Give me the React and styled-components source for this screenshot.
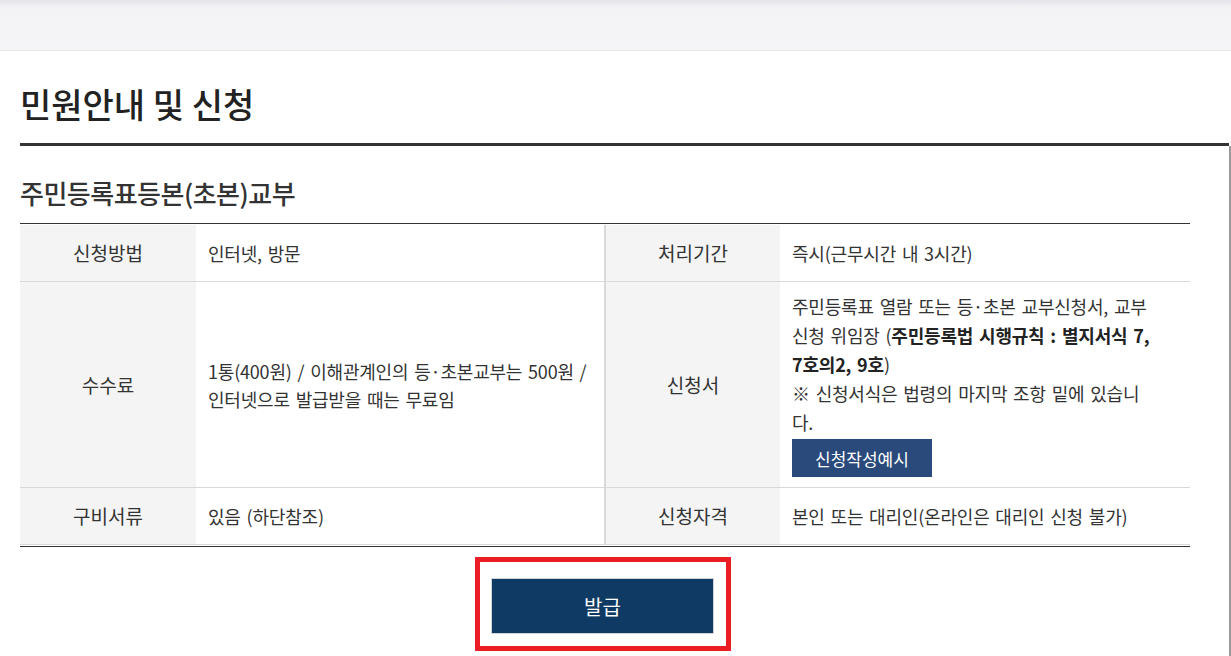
import React from 'react';
import styled, { createGlobalStyle } from 'styled-components';

const GlobalStyle = createGlobalStyle`
  html, body {
    margin: 0;
    padding: 0;
    background: #fff;
  }
  body {
    font-family: 'Noto Sans CJK KR', 'Noto Sans', sans-serif;
    color: #333;
  }
`;

const TopBar = styled.div`
  height: 50px;
  background: linear-gradient(#e3e3e9 0, #f3f2f5 7px, #f5f4f6 100%);
  border-bottom: 1px solid #e8e8e8;
`;

const Content = styled.div`
  padding-left: 20px;
`;

const PageTitle = styled.h2`
  margin: 36px 2px 0 0;
  padding-bottom: 22px;
  font-size: 34px;
  line-height: 34px;
  font-weight: 500;
  color: #222;
  border-bottom: 3px solid #333;
`;

const Section = styled.section`
  padding-top: 34px;
  border-right: 2px solid #9a9a9a;
  min-height: 476px;
`;

const SubTitle = styled.h3`
  margin: 0 0 17px;
  font-size: 26px;
  line-height: 26px;
  font-weight: 500;
  color: #333;
  letter-spacing: -0.5px;
`;

const InfoGrid = styled.div`
  display: grid;
  grid-template-columns: 176px 408px 176px 410px;
  width: 1170px;
  border-top: 1px solid #333;
  border-bottom: 1px solid #333;
  padding: 1px 0;
`;

const Th = styled.div`
  display: flex;
  align-items: center;
  justify-content: center;
  padding: 14px 10px;
  background: #f4f4f4;
  border-bottom: 1px solid #d9d9d9;
  border-left: ${(p) => (p.$divider ? '2px solid #d9d9d9' : '0')};
  font-size: 19px;
  line-height: 28px;
  color: #333;
`;

const Td = styled.div`
  display: flex;
  flex-direction: column;
  justify-content: center;
  padding: ${(p) => (p.$tight ? '10px 12px' : '14px 12px')};
  border-bottom: 1px solid #d9d9d9;
  font-size: 18px;
  line-height: ${(p) => (p.$tight ? '29px' : '28px')};
  color: #333;
  word-spacing: 2px;
  letter-spacing: -0.2px;

  b {
    font-weight: 700;
    color: #222;
  }
`;

const Line = styled.span`
  display: block;
  white-space: nowrap;
`;

const SampleButton = styled.button`
  align-self: flex-start;
  margin-top: 2px;
  height: 38px;
  padding: 0 23px;
  border: 0;
  background: #294a7b;
  color: #fff;
  font-family: inherit;
  font-size: 17px;
  cursor: pointer;
`;

const Highlight = styled.div`
  width: 256px;
  box-sizing: border-box;
  margin: 10px 0 0 455px;
  padding: 16px 12px 12px 11px;
  border: 5px solid #ec1c24;
`;

const IssueButton = styled.button`
  display: block;
  width: 223px;
  height: 56px;
  border: 1px solid #d4d4d4;
  background: #0f3a63;
  color: #fff;
  font-family: inherit;
  font-size: 20px;
  cursor: pointer;
`;

export default function App() {
  return (
    <>
      <GlobalStyle />
      <TopBar />
      <Content>
        <PageTitle>민원안내 및 신청</PageTitle>
        <Section>
          <SubTitle>주민등록표등본(초본)교부</SubTitle>
          <InfoGrid>
            <Th>신청방법</Th>
            <Td>인터넷, 방문</Td>
            <Th $divider>처리기간</Th>
            <Td>즉시(근무시간 내 3시간)</Td>

            <Th>수수료</Th>
            <Td>
              <Line>1통(400원) / 이해관계인의 등·초본교부는 500원 /</Line>
              <Line>인터넷으로 발급받을 때는 무료임</Line>
            </Td>
            <Th $divider>신청서</Th>
            <Td $tight>
              <Line>주민등록표 열람 또는 등·초본 교부신청서, 교부</Line>
              <Line>
                신청 위임장 (<b>주민등록법 시행규칙 : 별지서식 7,</b>
              </Line>
              <Line>
                <b>7호의2, 9호</b>)
              </Line>
              <Line>※ 신청서식은 법령의 마지막 조항 밑에 있습니</Line>
              <Line>다.</Line>
              <SampleButton type="button">신청작성예시</SampleButton>
            </Td>

            <Th>구비서류</Th>
            <Td>있음 (하단참조)</Td>
            <Th $divider>신청자격</Th>
            <Td>본인 또는 대리인(온라인은 대리인 신청 불가)</Td>
          </InfoGrid>
          <Highlight>
            <IssueButton type="button">발급</IssueButton>
          </Highlight>
        </Section>
      </Content>
    </>
  );
}
